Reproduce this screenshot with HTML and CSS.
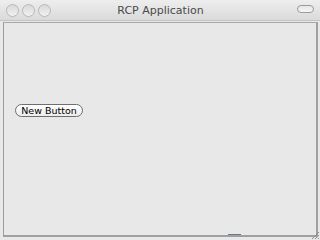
FILE: index.html
```html
<!DOCTYPE html>
<html lang="en">
<head>
  <meta charset="UTF-8">
  <title>RCP Application</title>
  <link rel="stylesheet" href="styles.css">
</head>
<body>
  <div class="window">
    <div class="titlebar">
      <div class="lights">
        <span class="light"></span>
        <span class="light"></span>
        <span class="light"></span>
      </div>
      <div class="title">RCP Application</div>
      <span class="zoom-pill"></span>
    </div>

    <div class="content">
      <button class="push">New Button</button>
    </div>

    <div class="statusbar">
      <span class="sash"></span>
      <svg class="grip" width="10" height="10" viewBox="0 0 10 10">
        <line x1="9" y1="2" x2="2" y2="9" stroke="#8a8a8a" stroke-width="1"/>
        <line x1="9" y1="5" x2="5" y2="9" stroke="#8a8a8a" stroke-width="1"/>
        <line x1="9" y1="8" x2="8" y2="9" stroke="#8a8a8a" stroke-width="1"/>
      </svg>
    </div>
  </div>
</body>
</html>
```

FILE: styles.css
```css
body {
  margin: 0;
  font-family: "DejaVu Sans", "Liberation Sans", sans-serif;
  background: #e8e8e8;
}
.window {
  width: 320px;
  height: 240px;
  display: flex;
  flex-direction: column;
  background: #e8e8e8;
  overflow: hidden;
}
.titlebar {
  height: 20px;
  border-bottom: 1px solid #c4c4c4;
  background: linear-gradient(to bottom, #eeeeee, #dadada);
  display: flex;
  align-items: center;
  padding: 0 6px 0 6px;
}
.lights {
  display: flex;
  gap: 3px;
  width: 46px;
}
.light {
  width: 11px;
  height: 11px;
  border-radius: 50%;
  border: 1px solid #b8b8b8;
  background: linear-gradient(to bottom, #d8d8d8, #f2f2f2);
}
.title {
  flex: 1;
  text-align: center;
  font-size: 11px;
  color: #4a4a4a;
  padding-right: 28px;
}
.zoom-pill {
  width: 15px;
  height: 6px;
  border-radius: 4px;
  border: 1px solid #9a9a9a;
  background: linear-gradient(to bottom, #e6e6e6, #f6f6f6);
  margin-top: -2px;
}
.content {
  flex: 1;
  margin: 1px 2px 0 3px;
  border-left: 1px solid #9c9c9c;
  border-top: 1px solid #a8a8a8;
  border-right: 2px solid #a0a0a0;
  border-bottom: 2px solid #a0a0a0;
  background: #e8e8e8;
  padding: 81px 0 0 11px;
}
.push {
  display: block;
  width: 68px;
  height: 13px;
  padding: 0;
  border: 1px solid #6e6e6e;
  border-radius: 7px;
  background: linear-gradient(to bottom, #ffffff, #ececec);
  font-family: "DejaVu Sans", "Liberation Sans", sans-serif;
  font-size: 9.5px;
  line-height: 11px;
  color: #000000;
}
.statusbar {
  height: 3px;
  position: relative;
}
.sash {
  position: absolute;
  left: 228px;
  top: -3px;
  width: 13px;
  height: 1px;
  background: #6a7898;
}
.grip {
  position: absolute;
  right: 0;
  bottom: 0;
}
```
